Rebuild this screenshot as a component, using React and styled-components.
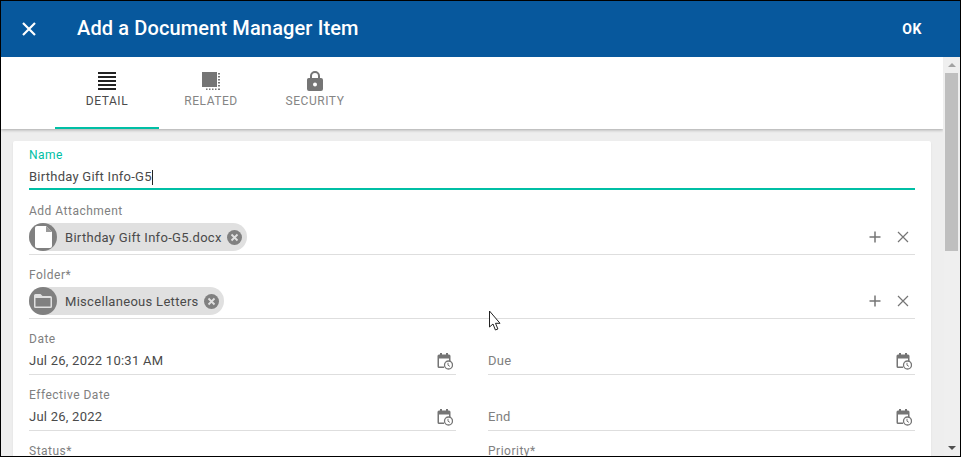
import React from 'react';
import styled, { createGlobalStyle } from 'styled-components';

const GlobalStyle = createGlobalStyle`
  html, body {
    margin: 0;
    padding: 0;
    background: #fff;
    overflow: hidden;
  }
  body {
    font-family: Roboto, "Liberation Sans", sans-serif;
  }
`;

const Frame = styled.div`
  position: relative;
  box-sizing: border-box;
  width: 961px;
  height: 457px;
  border: 1px solid #000;
  display: flex;
  flex-direction: column;
  overflow: hidden;
  background: #eee;
`;

const Header = styled.header`
  flex: none;
  height: 56px;
  background: #07589d;
  color: #fff;
  display: flex;
  align-items: center;
  padding: 0 38px 0 19px;
`;

const CloseButton = styled.div`
  width: 18px;
  height: 18px;
  display: flex;
  margin-right: 39px;
`;

const Title = styled.h1`
  flex: 1;
  margin: 0;
  font-size: 20px;
  font-weight: 500;
  letter-spacing: 0.13px;
  position: relative;
  top: -1px;
`;

const OkButton = styled.div`
  font-size: 14px;
  font-weight: 700;
  letter-spacing: 0.6px;
`;

const Body = styled.div`
  flex: 1;
  display: flex;
  min-height: 0;
`;

const Main = styled.div`
  flex: 1;
  min-width: 0;
  overflow: hidden;
`;

const TabBar = styled.nav`
  height: 72px;
  background: #fff;
  display: flex;
  padding-left: 54px;
  box-shadow: 0 1px 3px rgba(0, 0, 0, 0.3);
  position: relative;
`;

const Tab = styled.div`
  width: 104px;
  height: 72px;
  box-sizing: border-box;
  display: flex;
  flex-direction: column;
  align-items: center;
  padding-top: 14px;
  font-size: 12px;
  letter-spacing: 0.55px;
  color: ${props => (props.$active ? '#4a4a4a' : '#858585')};
  border-bottom: 2px solid ${props => (props.$active ? '#00bfa5' : 'transparent')};
  svg {
    display: block;
    margin-bottom: 3px;
  }
`;

const Card = styled.section`
  margin: 12px 12px 0 12px;
  padding: 6px 16px 0 16px;
  background: #fff;
  border-radius: 2px;
  box-shadow: 0 1px 2px rgba(0, 0, 0, 0.08);
`;

const Field = styled.div`
  border-bottom: ${props => (props.$focused ? '2px solid #00bfa5' : '1px solid #dedede')};
  height: ${props => props.$height}px;
  box-sizing: border-box;
  margin-bottom: ${props => props.$gap ?? 12}px;
`;

const Label = styled.div`
  font-size: 12px;
  line-height: 16px;
  letter-spacing: 0.5px;
  color: ${props => (props.$focused ? '#00bfa5' : '#808080')};
`;

const Value = styled.div`
  display: flex;
  align-items: center;
  font-size: 13px;
  line-height: 20px;
  letter-spacing: 0.25px;
  color: ${props => (props.$muted ? '#808080' : '#4a4a4a')};
`;

const NameValue = styled(Value)`
  margin-top: 4px;
`;

const Caret = styled.span`
  display: inline-block;
  width: 1px;
  height: 15px;
  background: #222;
`;

const ChipRow = styled.div`
  display: flex;
  align-items: center;
  justify-content: space-between;
  margin-top: 4px;
  padding-right: 6px;
`;

const Chip = styled.div`
  height: 28px;
  display: inline-flex;
  align-items: center;
  background: #e0e0e0;
  border-radius: 14px;
  font-size: 13px;
  letter-spacing: 0.3px;
  color: #4a4a4a;
  padding-right: 5px;
`;

const ChipAvatar = styled.div`
  width: 28px;
  height: 28px;
  border-radius: 50%;
  background: #808080;
  display: flex;
  align-items: center;
  justify-content: center;
  margin-right: 8px;
`;

const ChipClear = styled.div`
  width: 15px;
  height: 15px;
  margin-left: 5px;
  display: flex;
`;

const Actions = styled.div`
  display: flex;
  gap: 16px;
  align-items: center;
`;

const DateGrid = styled.div`
  display: grid;
  grid-template-columns: 1fr 1fr;
  column-gap: 32px;
`;

const DateRow = styled.div`
  display: flex;
  align-items: center;
  justify-content: space-between;
  height: 20px;
  margin-top: 4px;
  padding-right: 3px;
`;

const Scrollbar = styled.aside`
  flex: none;
  width: 16px;
  margin-left: 1px;
  background: #efefef;
  display: flex;
  flex-direction: column;
  align-items: center;
`;

const Arrow = styled.div`
  flex: none;
  height: 16px;
  display: flex;
  align-items: center;
  justify-content: center;
  width: 0;
`;

const ArrowUp = styled(Arrow)`
  &::before {
    content: '';
    border: 4px solid transparent;
    border-top: 0;
    border-bottom: 4px solid #a3a3a3;
  }
`;

const ArrowDown = styled(Arrow)`
  &::before {
    content: '';
    border: 4px solid transparent;
    border-bottom: 0;
    border-top: 4px solid #505050;
  }
`;

const ScrollTrack = styled.div`
  flex: 1;
  width: 100%;
  display: flex;
  padding-left: 1px;
  box-sizing: border-box;
`;

const Thumb = styled.div`
  width: 13px;
  height: 178px;
  background: #bfbfbf;
`;

const MousePointer = styled.svg`
  position: absolute;
  left: 487px;
  top: 309px;
`;

const CloseIcon = () => (
  <svg width="18" height="18" viewBox="0 0 18 18">
    <path d="M3 3 L15 15 M15 3 L3 15" stroke="#fff" strokeWidth="2.2" fill="none" />
  </svg>
);

const DetailIcon = () => (
  <svg width="18" height="20" viewBox="0 0 18 20">
    <path d="M0 1h18v2H0zM0 5h18v2H0zM0 9h18v2H0zM0 13h18v2H0zM0 17h18v2H0z" fill="#222" />
  </svg>
);

const RelatedIcon = () => (
  <svg width="18" height="20" viewBox="0 0 18 20">
    <path d="M0 1h15v15H0z" fill="#757575" />
    <path
      d="M16 2h2v1.500h-2zM16 5h2v1.500h-2zM16 8h2v1.500h-2zM16 11h2v1.500h-2zM16 14h2v1.500h-2zM4 17.500h1.500V19H4zM7 17.500h1.500V19H7zM10 17.500h1.500V19H10zM13 17.500h1.500V19H13zM16 17.500h2V19h-2z"
      fill="#757575"
    />
  </svg>
);

const LockIcon = () => (
  <svg width="18" height="20" viewBox="0 0 18 20">
    <path
      d="M9 0a5 5 0 0 0-5 5v2H3.500A2 2 0 0 0 1 9v9a2 2 0 0 0 2 2h12a2 2 0 0 0 2-2V9a2 2 0 0 0-2-2h-1V5a5 5 0 0 0-5-5zm0 2a3 3 0 0 1 3 3v2H6V5a3 3 0 0 1 3-3zm0 9.500a2 2 0 1 1 0 4 2 2 0 0 1 0-4z"
      fill="#757575"
    />
  </svg>
);

const FileIcon = () => (
  <svg width="17" height="22" viewBox="0 0 17 22">
    <path d="M2 0h9l6 6v14a2 2 0 0 1-2 2H2a2 2 0 0 1-2-2V2a2 2 0 0 1 2-2z" fill="#fff" />
    <path d="M11 0v6h6z" fill="#9a9a9a" />
  </svg>
);

const FolderIcon = () => (
  <svg width="18" height="14" viewBox="0 0 18 14">
    <path d="M1.500 0h5l2 2h8A1.500 1.500 0 0 1 18 3.500v9a1.500 1.500 0 0 1-1.500 1.500h-15A1.500 1.500 0 0 1 0 12.500v-11A1.500 1.500 0 0 1 1.500 0z" fill="#e0e0e0" />
    <path d="M1.500 4h15v8.500h-15z" fill="#808080" />
  </svg>
);

const ClearIcon = () => (
  <svg width="15" height="15" viewBox="0 0 15 15">
    <circle cx="7.500" cy="7.500" r="7.500" fill="#808080" />
    <path d="M4.500 4.500l6 6M10.500 4.500l-6 6" stroke="#e0e0e0" strokeWidth="1.800" />
  </svg>
);

const PlusIcon = () => (
  <svg width="12" height="12" viewBox="0 0 12 12">
    <path d="M6 .5v11M.5 6h11" stroke="#757575" strokeWidth="1.500" />
  </svg>
);

const CrossIcon = () => (
  <svg width="12" height="12" viewBox="0 0 12 12">
    <path d="M1 1l10 10M11 1L1 11" stroke="#757575" strokeWidth="1.200" />
  </svg>
);

const CalendarClockIcon = () => (
  <svg width="16" height="17" viewBox="0 0 16 17">
    <path
      d="M3 0h2v1.500h4V0h2v1.500h1A1.500 1.500 0 0 1 13.500 3v5H12V5.500H2v8h5V15H2A1.500 1.500 0 0 1 .5 13.500V3A1.500 1.500 0 0 1 2 1.500h1z"
      fill="#757575"
    />
    <circle cx="11.500" cy="12" r="4" fill="#fff" stroke="#757575" strokeWidth="1.300" />
    <path d="M11 9.800v2.400l1.900 1.200" stroke="#757575" strokeWidth="1" fill="none" />
  </svg>
);

const Pointer = () => (
  <MousePointer width="14" height="22" viewBox="0 0 14 22">
    <path
      d="M1.500 1v16l3.500-3 2.400 6 2.500-1L7.500 13.300H12z"
      fill="#fff"
      stroke="#222"
      strokeWidth="1"
    />
  </MousePointer>
);

const chips = [
  { label: 'Add Attachment', text: 'Birthday Gift Info-G5.docx', icon: <FileIcon /> },
  { label: 'Folder*', text: 'Miscellaneous Letters', icon: <FolderIcon /> },
];

const dates = [
  { label: 'Date', value: 'Jul 26, 2022 10:31 AM' },
  { label: 'Due', value: '', placeholder: true },
  { label: 'Effective Date', value: 'Jul 26, 2022' },
  { label: 'End', value: '', placeholder: true },
];

const App = () => (
  <Frame>
    <GlobalStyle />
    <Header>
      <CloseButton>
        <CloseIcon />
      </CloseButton>
      <Title>Add a Document Manager Item</Title>
      <OkButton>OK</OkButton>
    </Header>
    <Body>
      <Main>
        <TabBar>
          <Tab $active>
            <DetailIcon />
            DETAIL
          </Tab>
          <Tab>
            <RelatedIcon />
            RELATED
          </Tab>
          <Tab>
            <LockIcon />
            SECURITY
          </Tab>
        </TabBar>
        <Card>
          <Field $focused $height={43} $gap={13}>
            <Label $focused>Name</Label>
            <NameValue>
              Birthday Gift Info-G5
              <Caret />
            </NameValue>
          </Field>
          {chips.map(chip => (
            <Field key={chip.label} $height={52}>
              <Label>{chip.label}</Label>
              <ChipRow>
                <Chip>
                  <ChipAvatar>{chip.icon}</ChipAvatar>
                  {chip.text}
                  <ChipClear>
                    <ClearIcon />
                  </ChipClear>
                </Chip>
                <Actions>
                  <PlusIcon />
                  <CrossIcon />
                </Actions>
              </ChipRow>
            </Field>
          ))}
          <DateGrid>
            {dates.map(date => (
              <Field key={date.label} $height={44}>
                {date.placeholder ? <Label>&nbsp;</Label> : <Label>{date.label}</Label>}
                <DateRow>
                  <Value as="span" $muted={date.placeholder}>
                    {date.placeholder ? date.label : date.value}
                  </Value>
                  <CalendarClockIcon />
                </DateRow>
              </Field>
            ))}
            <Label>Status*</Label>
            <Label>Priority*</Label>
          </DateGrid>
        </Card>
      </Main>
      <Scrollbar>
        <ArrowUp />
        <ScrollTrack>
          <Thumb />
        </ScrollTrack>
        <ArrowDown />
      </Scrollbar>
    </Body>
    <Pointer />
  </Frame>
);

export default App;
